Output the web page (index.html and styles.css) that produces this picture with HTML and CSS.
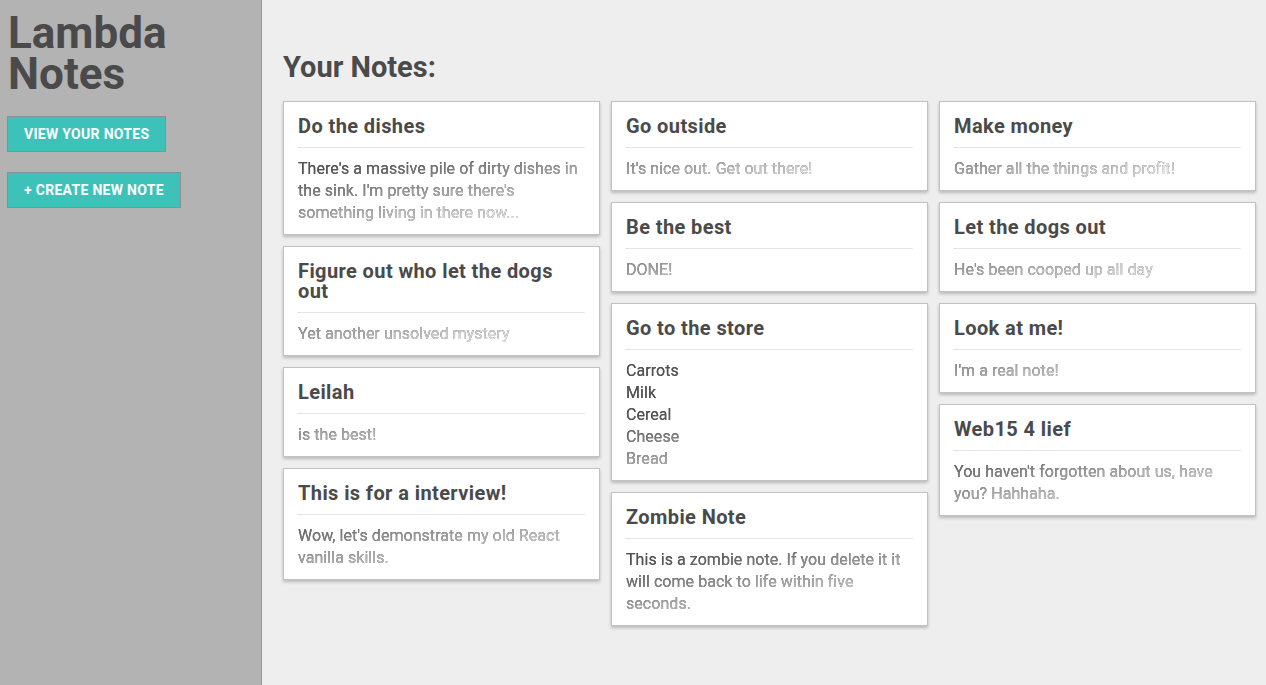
FILE: index.html
```html
<!DOCTYPE html>
<html lang="en">
<head>
<meta charset="utf-8">
<title>Lambda Notes</title>
<link rel="stylesheet" href="styles.css">
</head>
<body>
<div class="app">
  <aside class="sidebar">
    <h1 class="brand">Lambda Notes</h1>
    <nav class="nav">
      <a class="btn" href="#">View Your Notes</a>
      <a class="btn" href="#">+ Create New Note</a>
    </nav>
  </aside>
  <main class="main">
    <h2 class="page-title">Your Notes:</h2>
    <div class="notes">
      <div class="col">
        <div class="card"><h3 class="card-title">Do the dishes</h3><hr class="divider"><p class="card-body">There's a massive pile of dirty dishes in the sink. I'm pretty sure there's something living in there now...</p></div>
        <div class="card"><h3 class="card-title">Figure out who let the dogs out</h3><hr class="divider"><p class="card-body">Yet another unsolved mystery</p></div>
        <div class="card"><h3 class="card-title">Leilah</h3><hr class="divider"><p class="card-body">is the best!</p></div>
        <div class="card"><h3 class="card-title">This is for a interview!</h3><hr class="divider"><p class="card-body">Wow, let's demonstrate my old React vanilla skills.</p></div>
      </div>
      <div class="col">
        <div class="card"><h3 class="card-title">Go outside</h3><hr class="divider"><p class="card-body">It's nice out. Get out there!</p></div>
        <div class="card"><h3 class="card-title">Be the best</h3><hr class="divider"><p class="card-body">DONE!</p></div>
        <div class="card"><h3 class="card-title">Go to the store</h3><hr class="divider"><p class="card-body">Carrots
Milk
Cereal
Cheese
Bread</p></div>
        <div class="card"><h3 class="card-title">Zombie Note</h3><hr class="divider"><p class="card-body">This is a zombie note. If you delete it it will come back to life within five seconds.</p></div>
      </div>
      <div class="col">
        <div class="card"><h3 class="card-title">Make money</h3><hr class="divider"><p class="card-body">Gather all the things and profit!</p></div>
        <div class="card"><h3 class="card-title">Let the dogs out</h3><hr class="divider"><p class="card-body">He's been cooped up all day</p></div>
        <div class="card"><h3 class="card-title">Look at me!</h3><hr class="divider"><p class="card-body">I'm a real note!</p></div>
        <div class="card"><h3 class="card-title">Web15 4 lief</h3><hr class="divider"><p class="card-body">You haven't forgotten about us, have you? Hahhaha.</p></div>
      </div>
    </div>
  </main>
</div>
</body>
</html>
```
FILE: styles.css
```css
* { box-sizing: border-box; }
html, body { margin: 0; padding: 0; height: 100%; }
body {
  font-family: Roboto, "Liberation Sans", sans-serif;
  color: #4a4a4a;
  background: #eeeeee;
}
.app {
  display: flex;
  min-height: 100vh;
}
.sidebar {
  width: 262px;
  flex: 0 0 262px;
  background: #b3b3b3;
  border-right: 1px solid #9a9a9a;
  padding: 13px 0 0 7px;
}
.brand {
  margin: 0 0 0 1px;
  font-size: 44px;
  line-height: 41px;
  font-weight: 700;
  color: #4a4a4a;
}
.nav {
  display: flex;
  flex-direction: column;
  align-items: flex-start;
  gap: 20px;
  margin-top: 21px;
}
.btn {
  display: inline-block;
  background: #3dc2ba;
  border: 1px solid #8e8e8e;
  color: #ffffff;
  font-weight: 700;
  font-size: 14px;
  line-height: 16px;
  padding: 9px 16px 9px 16px;
  text-transform: uppercase;
  text-decoration: none;
  letter-spacing: 0.3px;
}
.main {
  flex: 1;
  padding: 50px 10px 20px 21px;
}
.page-title {
  margin: 0 0 17px 0;
  font-size: 29px;
  line-height: 34px;
  font-weight: 700;
  color: #4a4a4a;
}
.notes {
  display: grid;
  grid-template-columns: repeat(3, 317px);
  column-gap: 11px;
  align-items: start;
}
.col {
  display: flex;
  flex-direction: column;
  gap: 11px;
}
.card {
  background: #ffffff;
  border: 1px solid #c2c2c2;
  box-shadow: 0 2px 3px rgba(0, 0, 0, 0.22);
  padding: 14px 14px 10px 14px;
}
.card-title {
  margin: 0;
  font-size: 20px;
  line-height: 20px;
  font-weight: 700;
  letter-spacing: 0.4px;
  color: #4a4a4a;
}
.divider {
  margin: 11px 0 10px 0;
  height: 1px;
  border: 0;
  border-top: 1px solid #e4e4e4;
  border-left: 1px solid #b8b8b8;
}
.card-body {
  margin: 0;
  font-size: 16px;
  line-height: 22px;
  letter-spacing: 0.05px;
  white-space: pre-line;
  color: transparent;
  background: linear-gradient(170deg, #525252 60%, #ffffff 97%) left bottom / 100% 200px no-repeat, #525252;
  -webkit-background-clip: text;
  background-clip: text;
}
```
